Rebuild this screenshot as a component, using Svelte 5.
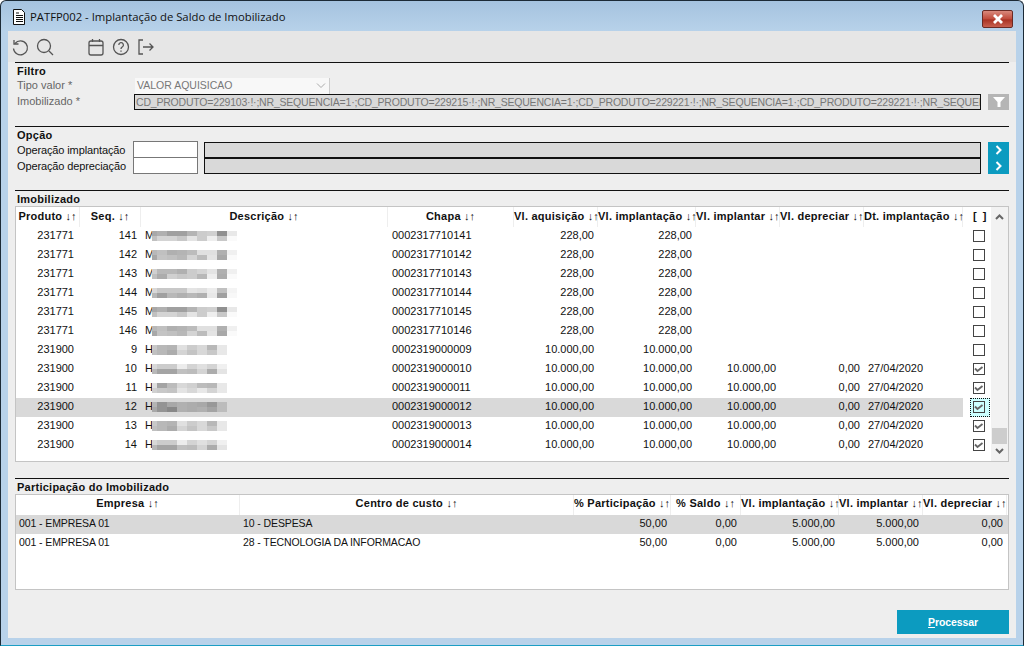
<script>
  const cols = [
    { t: 'Produto', w: 64 }, { t: 'Seq.', w: 61 }, { t: 'Descrição', w: 247 }, { t: 'Chapa', w: 126 },
    { t: 'Vl. aquisição', w: 84 }, { t: 'Vl. implantação', w: 98 }, { t: 'Vl. implantar', w: 84 },
    { t: 'Vl. depreciar', w: 84 }, { t: 'Dt. implantação', w: 99 }, { t: '[ ]', w: 28, plain: true }
  ];
  const track = cols.map((c) => c.w + 'px').join(' ');
  const A = ['a8b0a0a0b4ccd090e8', 'c0d4d4c8e4ccEEc8fa'];
  const B = ['b8c0b0b4bce0e0b0f0', 'a8c4c0b8d4bce4a8fa'];
  const C = ['d0b8b8b0ccd4e4b0f0', 'c0acd0c8ccb8eeacfa'];
  const D = ['d8c8c8c8e4e0ecc0f4', 'b8a0b8b0b8b0e8a0f8'];
  const E = ['c8b8b4e0ccd8b8e8', 'c0b8acd4c4d8c8e8'];
  const F = ['d8ccccecd4e0d4f0', 'b8a4a4c0bcd4ace4'];
  const G = ['e0a4bcd8d0bcb8e8', 'd0c8c4e4d8e8d4e8'];
  const H = ['b4' + '94a8b0aca898bc', 'a89488b0acb0a4bc'];
  const mk = (p, s, l, cod, a, b, c, d, e, chk, blur, sel) => ({ p, s, l, cod, a, b, c, d, e, chk, blur, sel });
  const rows = [
    mk('231771', 141, 'M', '0002317710141', '228,00', '228,00', '', '', '', false, A),
    mk('231771', 142, 'M', '0002317710142', '228,00', '228,00', '', '', '', false, B),
    mk('231771', 143, 'M', '0002317710143', '228,00', '228,00', '', '', '', false, C),
    mk('231771', 144, 'M', '0002317710144', '228,00', '228,00', '', '', '', false, D),
    mk('231771', 145, 'M', '0002317710145', '228,00', '228,00', '', '', '', false, A),
    mk('231771', 146, 'M', '0002317710146', '228,00', '228,00', '', '', '', false, B),
    mk('231900', 9, 'H', '0002319000009', '10.000,00', '10.000,00', '', '', '', false, E),
    mk('231900', 10, 'H', '0002319000010', '10.000,00', '10.000,00', '10.000,00', '0,00', '27/04/2020', true, F),
    mk('231900', 11, 'H', '0002319000011', '10.000,00', '10.000,00', '10.000,00', '0,00', '27/04/2020', true, G),
    mk('231900', 12, 'H', '0002319000012', '10.000,00', '10.000,00', '10.000,00', '0,00', '27/04/2020', true, H, true),
    mk('231900', 13, 'H', '0002319000013', '10.000,00', '10.000,00', '10.000,00', '0,00', '27/04/2020', true, E),
    mk('231900', 14, 'H', '0002319000014', '10.000,00', '10.000,00', '10.000,00', '0,00', '27/04/2020', true, F)
  ];
  const cols2 = [
    { t: 'Empresa', w: 224 }, { t: 'Centro de custo', w: 334 }, { t: '% Participação', w: 97 }, { t: '% Saldo', w: 70 },
    { t: 'Vl. implantação', w: 98 }, { t: 'Vl. implantar', w: 84 }, { t: 'Vl. depreciar', w: 84 }
  ];
  const track2 = cols2.map((c) => c.w + 'px').join(' ');
  const rows2 = [
    ['001 - EMPRESA 01', '10 - DESPESA', '50,00', '0,00', '5.000,00', '5.000,00', '0,00'],
    ['001 - EMPRESA 01', '28 - TECNOLOGIA DA INFORMACAO', '50,00', '0,00', '5.000,00', '5.000,00', '0,00']
  ];
  function cells(pattern) {
    const out = [];
    pattern.forEach((line, y) => {
      for (let i = 0; i < line.length / 2; i++) {
        out.push({
          x: i === 0 ? 0 : 5 + (i - 1) * 10,
          w: i === 0 ? 5 : 10,
          y: y * 5,
          fill: '#' + line.slice(i * 2, i * 2 + 2).repeat(3)
        });
      }
    });
    return out;
  }
</script>

<div class="window">
  <header class="titlebar">
    <svg class="doc" width="16" height="18" viewBox="0 0 16 18" aria-hidden="true">
      <path d="M2.500 1.500h8l3 3v12h-11z" fill="#fff" stroke="#111" />
      <path d="M5 5h3M5 7.500h7M5 9.500h7M5 11.500h7M5 13.500h7" stroke="#111" />
    </svg>
    <span class="title">PATFP002 - Implantação de Saldo de Imobilizado</span>
    <div class="close">
      <svg width="12" height="10" viewBox="0 0 12 10" aria-hidden="true"><path d="M2 1l8 8M10 1l-8 8" stroke="#fff" stroke-width="2.800" /></svg>
    </div>
  </header>

  <div class="client">
    <div class="toolbar">
      <svg class="ti" width="20" height="20" viewBox="0 0 20 20" aria-hidden="true"><path d="M5 6.500a7 7 0 1 1-1.500 5" /><path d="M4 3v4h4.500" /></svg>
      <svg class="ti" width="20" height="20" viewBox="0 0 20 20" aria-hidden="true"><circle cx="9" cy="9" r="6.500" /><path d="M14 14l4 4" /></svg>
      <span class="tgap"></span>
      <svg class="ti" width="20" height="20" viewBox="0 0 20 20" aria-hidden="true"><rect x="3" y="4" width="14" height="14" rx="2" /><path d="M3 8.500h14M6.500 2v3M13.500 2v3" /></svg>
      <svg class="ti" width="20" height="20" viewBox="0 0 20 20" aria-hidden="true"><circle cx="10" cy="10" r="7.500" /><path d="M7.800 8a2.300 2.300 0 1 1 3.400 2c-.8.500-1.200 1-1.200 2" /><path d="M10 13.500v1.200" /></svg>
      <svg class="ti" width="20" height="20" viewBox="0 0 20 20" aria-hidden="true"><path d="M7 3H3v14h4" /><path d="M7 10h10M13.500 6.500L17 10l-3.500 3.500" /></svg>
    </div>

    <section class="sec filtro">
      <h2>Filtro</h2>
      <div class="frow">
        <span class="lbl dim">Tipo valor *</span>
        <div class="select"><span class="stext">VALOR AQUISICAO</span>
          <svg width="10" height="6" viewBox="0 0 10 6" aria-hidden="true"><path d="M1 .5l4 4 4-4" fill="none" stroke="#aaa" /></svg>
        </div>
      </div>
      <div class="frow">
        <span class="lbl dim">Imobilizado *</span>
        <div class="ro">CD_PRODUTO=229103·!·;NR_SEQUENCIA=1·;CD_PRODUTO=229215·!·;NR_SEQUENCIA=1·;CD_PRODUTO=229221·!·;NR_SEQUENCIA=1·;CD_PRODUTO=229221·!·;NR_SEQUENCIA=2·</div>
        <div class="fbtn">
          <svg width="12" height="10" viewBox="0 0 12 10" aria-hidden="true"><path d="M0 0h12L7.500 5v5h-3V5z" fill="#fff" /></svg>
        </div>
      </div>
    </section>

    <section class="sec opcao">
      <h2>Opção</h2>
      <div class="oprow">
        <span class="lbl">Operação implantação</span>
        <div class="inp"></div>
        <div class="desc"></div>
        <div class="go"><svg width="8" height="10" viewBox="0 0 8 10" aria-hidden="true"><path d="M1.500 1l4 4-4 4" fill="none" stroke="#fff" stroke-width="2" /></svg></div>
      </div>
      <div class="oprow">
        <span class="lbl">Operação depreciação</span>
        <div class="inp"></div>
        <div class="desc"></div>
        <div class="go"><svg width="8" height="10" viewBox="0 0 8 10" aria-hidden="true"><path d="M1.500 1l4 4-4 4" fill="none" stroke="#fff" stroke-width="2" /></svg></div>
      </div>
    </section>

    <section class="sec imob">
      <h2>Imobilizado</h2>
      <div class="grid g1">
        <div class="gmain">
          <div class="ghead" style="grid-template-columns:{track}">
            {#each cols as c}<div class="gh" class:plain={c.plain}>{c.plain ? c.t : c.t + ' '}{#if !c.plain}<span class="ar">↓↑</span>{/if}</div>{/each}
          </div>
          {#each rows as r}
            <div class="grow" class:sel={r.sel} style="grid-template-columns:{track}">
              <div class="c rt pad-p">{r.p}</div>
              <div class="c rt">{r.s}</div>
              <div class="c blur"><span class="ini">{r.l}</span>
                <svg width="85" height="10" viewBox="0 0 85 10" aria-hidden="true">
                  {#each cells(r.blur) as b}<rect x={b.x} y={b.y} width={b.w} height="5" fill={b.fill} />{/each}
                </svg>
              </div>
              <div class="c lf">{r.cod}</div>
              <div class="c rt">{r.a}</div>
              <div class="c rt">{r.b}</div>
              <div class="c rt">{r.c}</div>
              <div class="c rt">{r.d}</div>
              <div class="c lf">{r.e}</div>
              <div class="c chk">
                <span class="fw" class:focus={r.sel}>
                  <span class="box">
                    {#if r.chk}<svg width="10" height="8" viewBox="0 0 10 8" aria-hidden="true"><path d="M1 3.500l2.500 2.500 5-4" fill="none" stroke="#666" stroke-width="1.800" /></svg>{/if}
                  </span>
                </span>
              </div>
            </div>
          {/each}
        </div>
        <div class="scroll">
          <svg width="9" height="6" viewBox="0 0 9 6" aria-hidden="true"><path d="M1 5l3.500-3.500L8 5" fill="none" stroke="#666" stroke-width="2" /></svg>
          <div class="thumb"></div>
          <svg width="9" height="6" viewBox="0 0 9 6" aria-hidden="true"><path d="M1 1l3.500 3.500L8 1" fill="none" stroke="#666" stroke-width="2" /></svg>
        </div>
      </div>
    </section>

    <section class="sec part">
      <h2>Participação do Imobilizado</h2>
      <div class="grid g2">
        <div class="gmain">
          <div class="ghead h2" style="grid-template-columns:{track2}">
            {#each cols2 as c}<div class="gh">{c.t + ' '}<span class="ar">↓↑</span></div>{/each}
          </div>
          {#each rows2 as r, i}
            <div class="grow" class:sel={i === 0} style="grid-template-columns:{track2}">
              <div class="c lf2 caps">{r[0]}</div>
              <div class="c lf3 caps">{r[1]}</div>
              {#each r.slice(2) as v}<div class="c rt">{v}</div>{/each}
            </div>
          {/each}
        </div>
      </div>
    </section>

    <div class="actions"><button class="proc"><u>P</u>rocessar</button></div>
  </div>
</div>

<style>
  :global(body) { margin: 0; background: #fff; }
  .window {
    width: 1024px; height: 646px; box-sizing: border-box; overflow: hidden;
    display: flex; flex-direction: column;
    background: linear-gradient(#a5c3df, #b8d2ea 31px);
    border: 1px solid #1c2a36; border-bottom-color: #1b9ec4; border-radius: 6px 6px 0 0;
    padding: 0 7px 7px;
    font: 11px "Liberation Sans", Arial, sans-serif; color: #111;
  }
  .titlebar { height: 30px; flex: none; display: flex; align-items: center; position: relative; padding-left: 3px; }
  .doc { margin-top: 1px; }
  .title { font: 11.300px "Open Sans", sans-serif; margin-left: 3px; color: #111; }
  .close {
    position: absolute; right: 3px; top: 9px; width: 31px; height: 18px; box-sizing: border-box;
    display: flex; align-items: center; justify-content: center;
    background: linear-gradient(#d9897c, #c04a3a 50%, #a93223 55%, #c7604f);
    border: 1px solid #6a2a24; border-radius: 2px;
  }
  .client { flex: 1; background: #eeeeee; padding-bottom: 4px; display: flex; flex-direction: column; }
  .toolbar { height: 31px; flex: none; background: #e6e6e6; display: flex; align-items: center; gap: 5px; padding-left: 2px; box-sizing: border-box; }
  .ti { fill: none; stroke: #555; stroke-width: 1.300; flex: none; }
  .tgap { width: 21px; }
  .sec { margin: 0 7px; border-top: 1px solid #111; flex: none; box-sizing: border-box; }
  h2 { margin: 1px 0 0; font: bold 11px "Liberation Sans", sans-serif; height: 14px; line-height: 14px; padding: 0 2px; letter-spacing: .25px; color: #111; }
  .filtro { height: 64px; }
  .frow { display: flex; align-items: center; height: 16px; }
  .lbl { width: 119px; padding-left: 2px; flex: none; box-sizing: border-box; }
  .frow .lbl { line-height: 14px; padding-bottom: 2px; }
  .dim { color: #666; }
  .select {
    width: 195px; height: 16px; margin-left: 1px; box-sizing: border-box; background: #f8f8f8; border-right: 1px solid #ccc; color: #777;
    display: flex; justify-content: space-between; align-items: center; padding: 0 3px 0 2px; font-size: 10.500px;
  }
  .stext { padding-bottom: 2px; }
  .ro {
    width: 847px; height: 16px; box-sizing: border-box; border: 1px solid #111; background: #d9d9d9; color: #777;
    white-space: nowrap; overflow: hidden; line-height: 14px; padding-left: 1px; font-size: 10.500px; letter-spacing: -.2px;
  }
  .fbtn { width: 21px; height: 16px; margin-left: 7px; background: #b5b5b5; display: flex; align-items: center; justify-content: center; }
  .opcao { height: 64px; }
  .opcao h2 { height: 13px; }
  .oprow { display: flex; height: 16px; align-items: flex-start; }
  .oprow .lbl { width: 118px; line-height: 18px; height: 16px; letter-spacing: -.12px; white-space: nowrap; }
  .inp { width: 65px; height: 17px; box-sizing: border-box; border: 1px solid #777; background: #fff; flex: none; }
  .desc { width: 777px; height: 16px; margin-top: 1px; box-sizing: border-box; margin-left: 6px; border: 1px solid #111; background: #d9d9d9; flex: none; }
  .go { width: 21px; height: 16px; margin-top: 1px; margin-left: 7px; background: #0c9bc0; display: flex; align-items: center; justify-content: center; flex: none; }
  .imob { height: 288px; }
  .grid { border: 1px solid #c4c4c4; background: #fff; display: flex; box-sizing: border-box; }
  .g1 { height: 256px; }
  .g2 { height: 96px; }
  .gmain { flex: 1; min-width: 0; }
  .ghead { display: grid; height: 20px; }
  .gh { font: bold 11px "Liberation Sans", sans-serif; letter-spacing: .25px; text-align: center; line-height: 18px; white-space: pre; border-right: 1px solid #eee; box-sizing: border-box; }
  .ar { font-weight: 400; letter-spacing: 0; }
  .gh.plain { letter-spacing: 1.500px; padding-left: 7px; border-right: 0; }
  .ghead.h2 { height: 20px; }
  .ghead.h2 .gh { line-height: 17px; }
  .grow { display: grid; height: 19px; align-items: center; }
  .grow.sel { background: #d9d9d9; }
  .c { white-space: nowrap; line-height: 16px; height: 19px; box-sizing: border-box; }
  .rt { text-align: right; padding-right: 4px; }
  .pad-p { padding-right: 6px; }
  .lf { padding-left: 4px; }
  .lf2 { padding-left: 3px; }
  .lf3 { padding-left: 3px; }
  .caps { font-size: 10.500px; letter-spacing: -.1px; }
  .blur { padding: 0 0 1px 4px; display: flex; align-items: center; }
  .ini { width: 7px; flex: none; align-self: flex-start; }
  .blur svg { display: block; flex: none; }
  .chk { display: flex; background: #fff; padding-left: 7px; }
  .fw { width: 20px; height: 19px; box-sizing: border-box; padding: 3px 0 0 3px; display: flex; align-items: flex-start; }
  .fw.focus { outline: 1px dotted #111; outline-offset: -1px; background: #ccffff; }
  .box { width: 10px; height: 10px; border: 1px solid #444; display: flex; align-items: center; justify-content: center; }
  .scroll { width: 17px; flex: none; background: #f2f2f2; position: relative; display: flex; flex-direction: column; align-items: center; justify-content: space-between; padding: 7px 0; box-sizing: border-box; }
  .thumb { position: absolute; left: 1px; right: 1px; bottom: 17px; height: 16px; background: #cdcdcd; }
  .part { height: 114px; }
  .actions { flex: 1; display: flex; justify-content: flex-end; align-items: flex-end; padding: 0 7px; }
  .proc {
    width: 112px; height: 24px; background: #0c9bc0; color: #fff; border: 0; padding: 0;
    font: bold 10.500px "Liberation Sans", sans-serif; letter-spacing: -.1px;
  }
</style>
